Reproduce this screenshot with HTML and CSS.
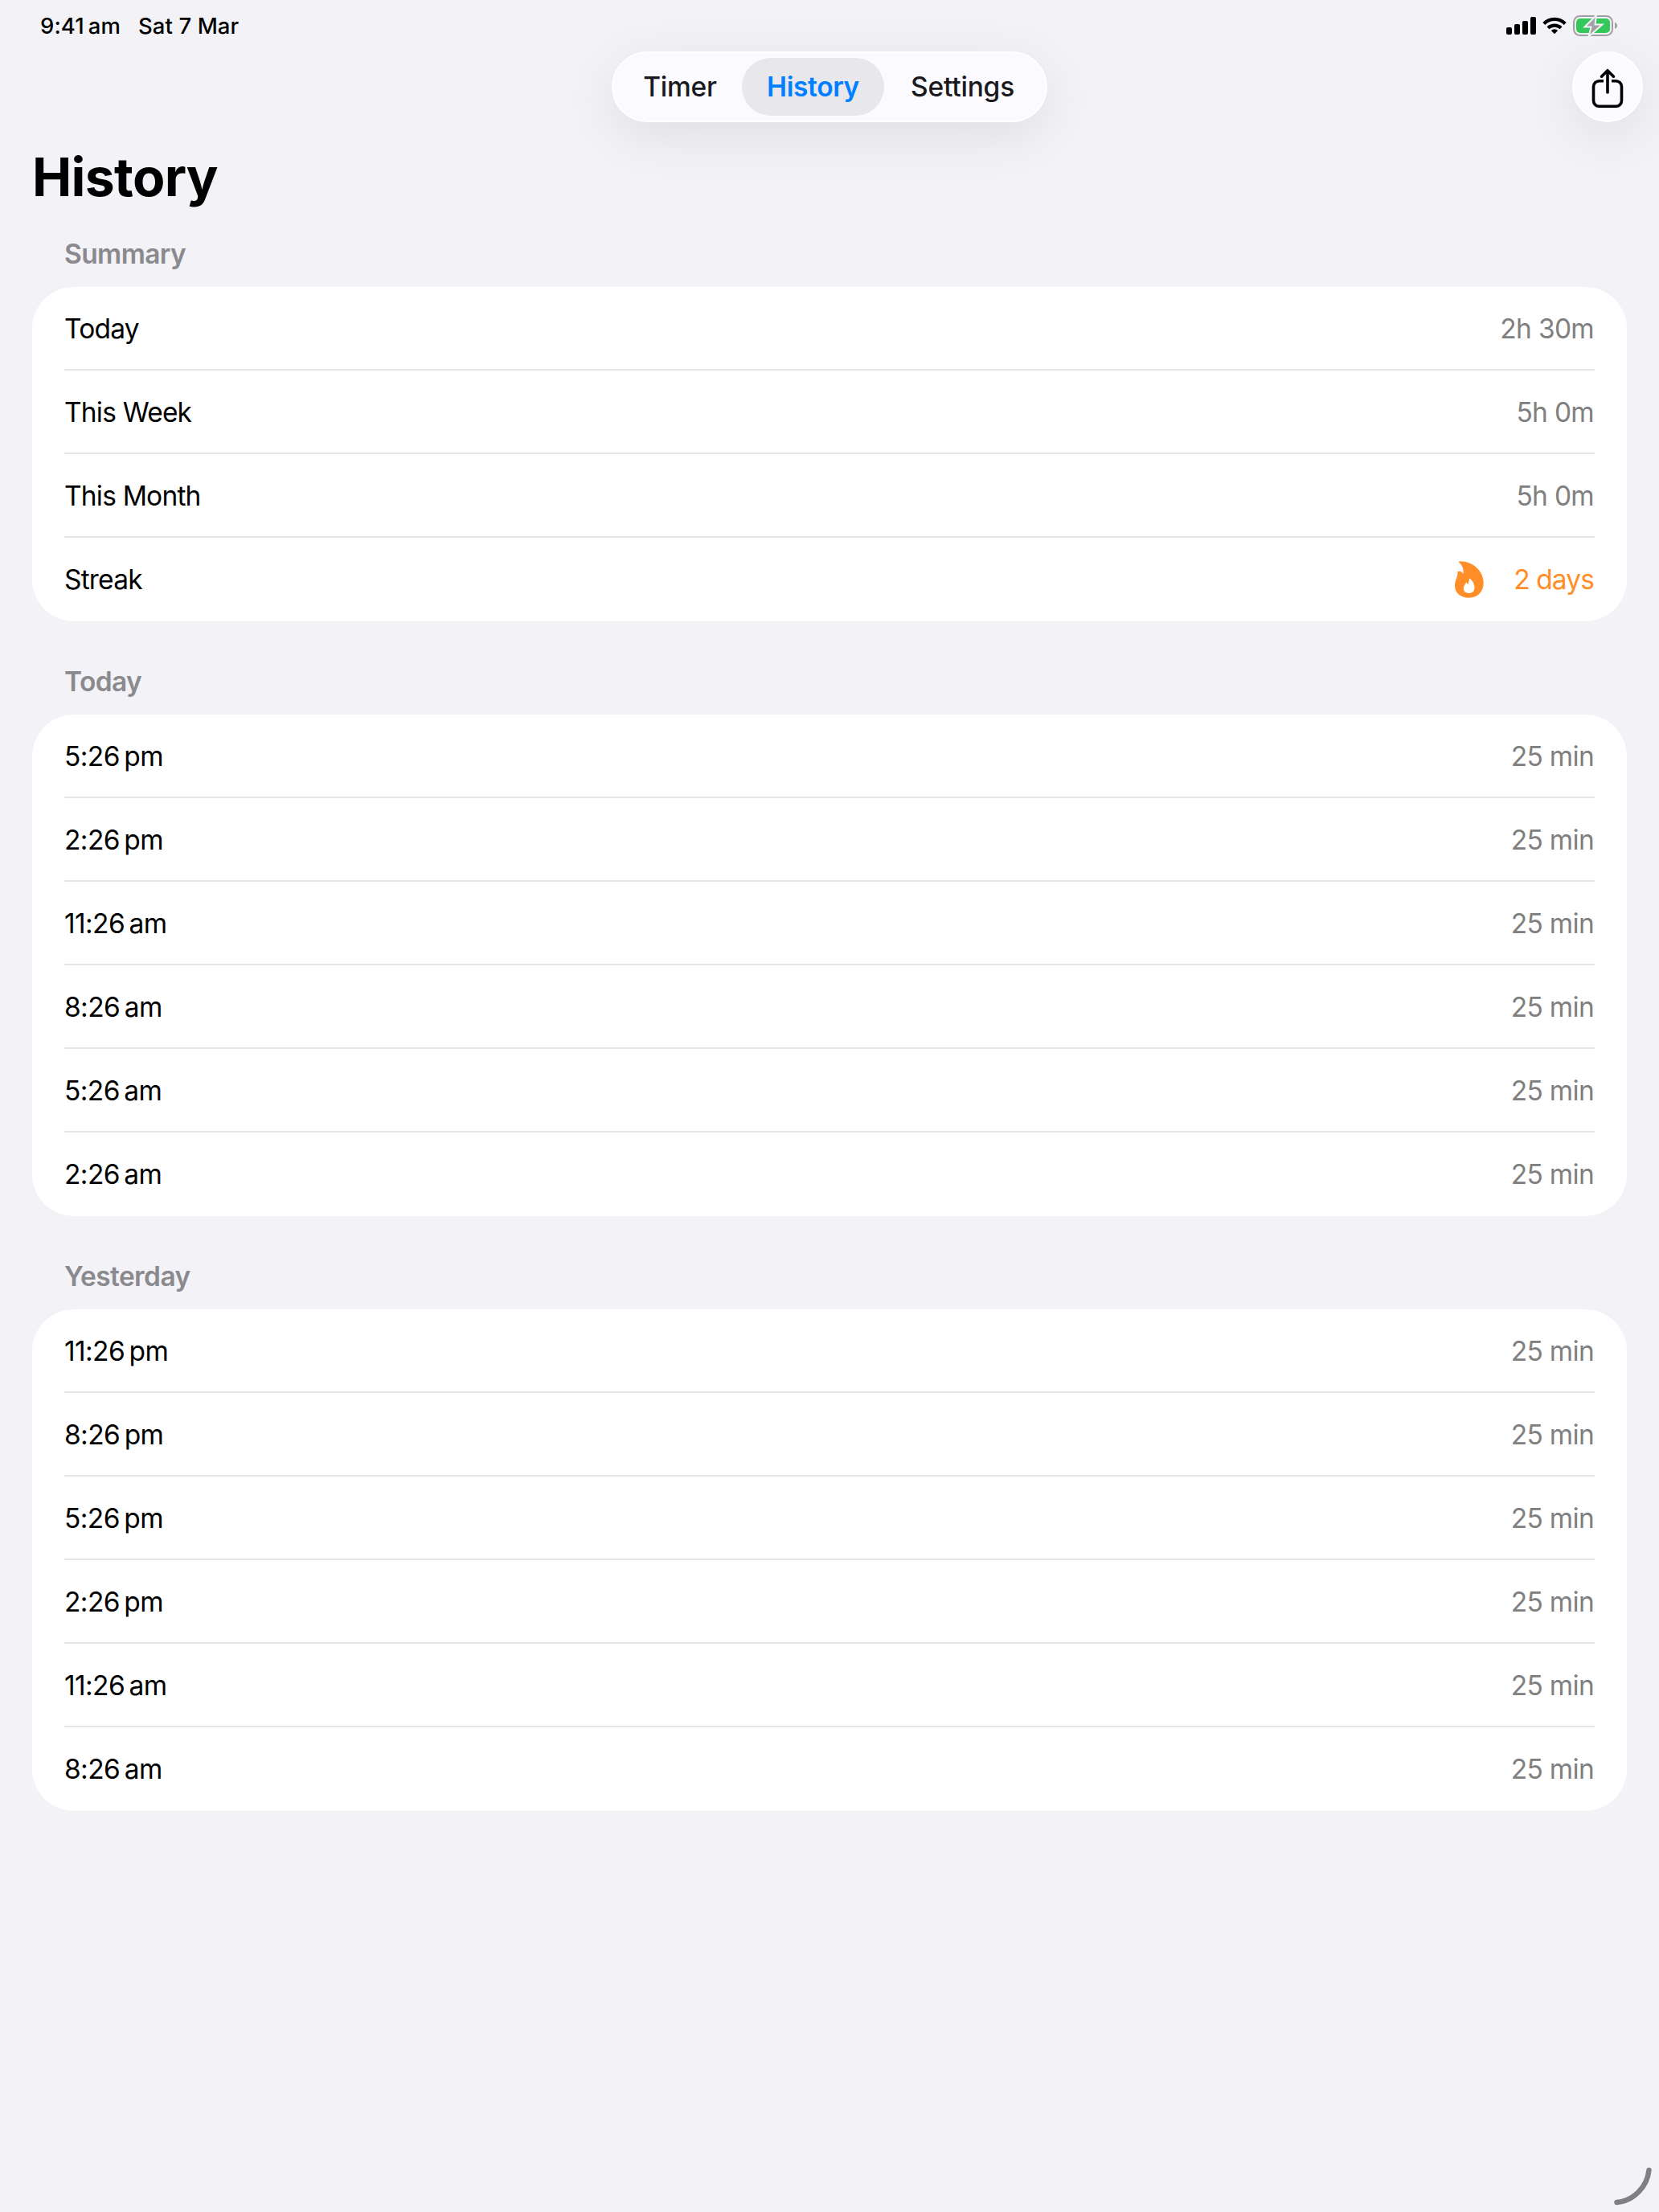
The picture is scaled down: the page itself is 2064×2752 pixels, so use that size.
FILE: index.html
```html
<!DOCTYPE html>
<html lang="en">

<head>
  <meta charset="UTF-8">
  <meta name="viewport" content="width=device-width, initial-scale=1.0">
  <title>History</title>
  <link rel="stylesheet" href="styles.css">
</head>

<body>
  <div class="status">
    <div class="status-left">
      <span class="clock">9:41&#8201;am</span>
      <span class="date">Sat 7 Mar</span>
    </div>
    <div class="status-right">
      <svg class="signal" width="38" height="24" viewBox="0 0 38 24">
        <rect x="1" y="14" width="7" height="9" rx="2" />
        <rect x="11" y="10" width="7" height="13" rx="2" />
        <rect x="21" y="6" width="7" height="17" rx="2" />
        <rect x="31" y="1" width="7" height="22" rx="2" />
      </svg>
      <svg class="wifi" width="30" height="22" viewBox="0 0 30 22">
        <path d="M1.800 8.400a18.600 18.600 0 0 1 26.400 0" />
        <path d="M6.900 13.700a12 12 0 0 1 16.200 0" />
        <path class="dot" d="M15 21.200l4.200-4.200a6 6 0 0 0-8.400 0z" />
      </svg>
      <svg class="battery" width="56" height="28" viewBox="0 0 56 28">
        <rect class="shell" x="1" y="2" width="48" height="24" rx="7.500" />
        <rect class="level" x="4" y="5" width="42" height="18" rx="5" />
        <path class="nub" d="M52 10v8c2-.6 3-2.200 3-4s-1-3.400-3-4z" />
        <path class="bolt" d="M29 1L14.500 15.500h8l-3 12L36.500 12.500h-9z" />
      </svg>
    </div>
  </div>

  <div class="topbar">
    <div class="tabs">
      <a class="tab timer">Timer</a>
      <a class="tab history current">History</a>
      <a class="tab settings">Settings</a>
    </div>
    <div class="share">
      <svg width="44" height="54" viewBox="0 0 44 54">
        <path class="tray" d="M17 19.800h-5.500a7 7 0 0 0-7 7V44.200a7 7 0 0 0 7 7h21a7 7 0 0 0 7-7V26.800a7 7 0 0 0-7-7H27" />
        <path d="M22 34V7.500M14.500 14.200L22 6.700l7.500 7.500" />
      </svg>
    </div>
  </div>

  <h1>History</h1>

  <h2>Summary</h2>
  <ul class="card">
    <li><span>Today</span><em>2h 30m</em></li>
    <li><span>This Week</span><em>5h 0m</em></li>
    <li><span>This Month</span><em>5h 0m</em></li>
    <li>
      <span>Streak</span>
      <em class="streak">
        <svg width="36" height="46" viewBox="0 0 36 46">
          <path fill-rule="evenodd" d="M5.500.3C21 0 35.700 11 35.700 27.500C35.700 38 28.500 45.700 17.500 45.700C7 45.700 0 39.500 0 30.500C0 23.500 3.700 21 3.500 13C5.500 12 9 13 10.500 16C11.500 9 8.500 4.500 5 1.500zM18 21.500C18 25 17 26.500 16.500 29C15.500 28.500 15 27.500 14.500 26.500C13 28.500 10.800 31 10.800 34.300C10.800 37.800 13.500 40 17.300 40C21.500 40 24.500 37.500 24.500 33C24.500 28 21.500 23.500 18 21.500z" />
        </svg>
        2 days
      </em>
    </li>
  </ul>

  <h2>Today</h2>
  <ul class="card times">
    <li><span>5:26&#8201;pm</span><em>25 min</em></li>
    <li><span>2:26&#8201;pm</span><em>25 min</em></li>
    <li><span>11:26&#8201;am</span><em>25 min</em></li>
    <li><span>8:26&#8201;am</span><em>25 min</em></li>
    <li><span>5:26&#8201;am</span><em>25 min</em></li>
    <li><span>2:26&#8201;am</span><em>25 min</em></li>
  </ul>

  <h2>Yesterday</h2>
  <ul class="card times">
    <li><span>11:26&#8201;pm</span><em>25 min</em></li>
    <li><span>8:26&#8201;pm</span><em>25 min</em></li>
    <li><span>5:26&#8201;pm</span><em>25 min</em></li>
    <li><span>2:26&#8201;pm</span><em>25 min</em></li>
    <li><span>11:26&#8201;am</span><em>25 min</em></li>
    <li><span>8:26&#8201;am</span><em>25 min</em></li>
  </ul>

  <svg class="corner" width="50" height="50" viewBox="0 0 50 50">
    <path d="M43.500 4A45 45 0 0 1 3.500 44" />
  </svg>
</body>

</html>
```
FILE: styles.css
```css
* {
  padding: 0;
  margin: 0;
  list-style: none;
  box-sizing: border-box;
}

body {
  height: 2752px;
  padding: 0 40px;
  background-color: #f2f2f7;
  font-family: Inter, "Liberation Sans", sans-serif;
  font-size: 33.5px;
  letter-spacing: -0.7px;
  color: #000;
  position: relative;
  overflow: hidden;
}

.status {
  height: 64px;
  padding: 0 11px 0 10px;
  display: flex;
  justify-content: space-between;
  align-items: center;
  font-size: 27.5px;
  font-weight: 500;
  letter-spacing: 0.1px;
}

.status-left {
  display: flex;
  gap: 22px;
}

.status-right {
  display: flex;
  align-items: center;
  gap: 8px;
}

.wifi path {
  fill: none;
  stroke: #000;
  stroke-width: 4.2;
}

.wifi .dot {
  fill: #000;
  stroke: none;
}

.battery .shell {
  fill: none;
  stroke: #a1a0a4;
  stroke-width: 2;
}

.battery .level {
  fill: #34c759;
}

.battery .nub {
  fill: #a1a0a4;
}

.battery .bolt {
  fill: #a1a0a4;
  stroke: #f2f2f7;
  stroke-width: 2;
}

.topbar {
  height: 88px;
  display: flex;
  justify-content: center;
  position: relative;
}

.tabs,
.share {
  background-color: #fafaff;
  border: 2px solid #fff;
  box-shadow: 0 16px 64px rgba(0, 0, 0, 0.085);
}

.tabs {
  width: 542px;
  height: 88px;
  padding: 6px;
  border-radius: 44px;
  display: flex;
}

.tab {
  height: 72px;
  line-height: 72px;
  border-radius: 36px;
  text-align: center;
  font-weight: 500;
  letter-spacing: -0.2px;
  color: #1a1a1e;
}

.timer {
  width: 154px;
}

.history {
  width: 177px;
}

.settings {
  width: 195px;
}

.tab.current {
  background-color: #e8e7ec;
  color: #0080ff;
  font-weight: 600;
  letter-spacing: -0.4px;
}

.share {
  width: 88px;
  height: 88px;
  border-radius: 50%;
  position: absolute;
  top: 0;
  right: -20px;
  display: flex;
  justify-content: center;
  align-items: center;
}

.share path {
  fill: none;
  stroke: #000;
  stroke-width: 3.6;
  stroke-linecap: round;
  stroke-linejoin: round;
}

.share .tray {
  stroke-linecap: butt;
}

h1 {
  margin-top: 28px;
  height: 80px;
  line-height: 80px;
  font-size: 66px;
  font-weight: 700;
}

h2 {
  height: 97px;
  padding: 36px 40px 0;
  line-height: 40px;
  font-size: 33.5px;
  font-weight: 600;
  letter-spacing: -0.6px;
  color: #8a8a8e;
}

.card + h2 {
  height: 116px;
  padding-top: 55px;
}

.card {
  padding: 0 40px;
  background-color: #fff;
  border-radius: 52px;
}

.card li {
  height: 104px;
  padding: 2px 1px 0 0;
  border-bottom: 2px solid #e6e6e6;
  display: flex;
  justify-content: space-between;
  align-items: center;
}

.card li:last-child {
  border-color: transparent;
}

.card span {
  letter-spacing: -0.8px;
}

.times span {
  letter-spacing: -0.6px;
}

.card em {
  font-style: normal;
  color: #808080;
}

.card .streak {
  display: flex;
  align-items: center;
  gap: 37px;
  letter-spacing: -0.9px;
  color: #ff8d28;
}

.streak svg {
  fill: #ff8d28;
}

.corner {
  position: absolute;
  right: 6px;
  bottom: 6px;
}

.corner path {
  fill: none;
  stroke: #808080;
  stroke-width: 6.5;
  stroke-linecap: round;
}
```
